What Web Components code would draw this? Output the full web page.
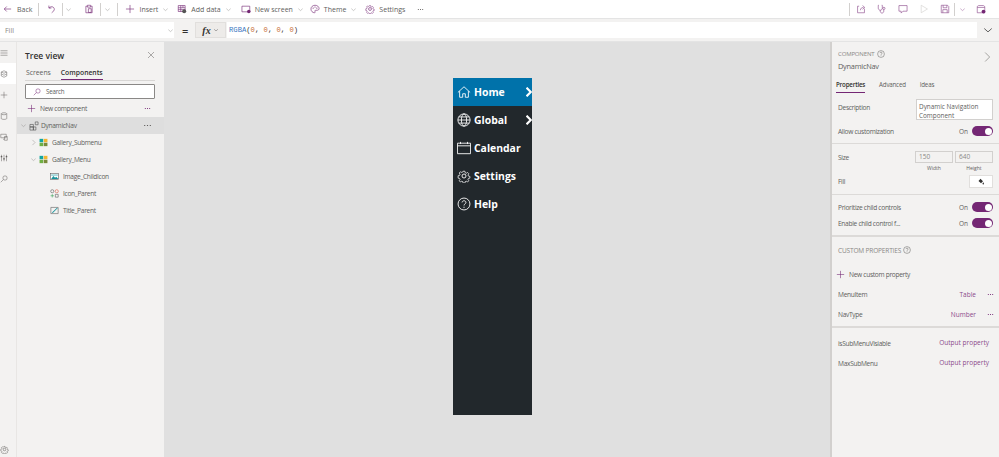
<!DOCTYPE html>
<html>
<head>
<meta charset="utf-8">
<title>Power Apps component editor</title>
<style>
  html, body { margin: 0; height: 100%; }
  body { font-family: "Open Sans", "Liberation Sans", sans-serif; overflow: hidden; background: #e0e0e0; }
</style>
</head>
<body>
<studio-app></studio-app>

<script>
const P = 'fill="none" stroke="currentColor" stroke-width="1"';
const ICONS = {
  back: `<path ${P} d="M13 8H2M6 4 2 8l4 4"/>`,
  undo: `<path ${P} d="M3 2.500v4h4M3.200 6.500C5 4.500 7.500 3.800 9.500 4.800c2.300 1.200 2.800 4 1.500 6L7.500 14"/>`,
  paste: `<path ${P} d="M5 3.500H3v10.500h10V3.500h-2M5.500 2h5v3h-5zM7 7.500h4.500v6H7z"/>`,
  plus: `<path ${P} d="M8 1.500v13M1.500 8h13"/>`,
  chev: `<path ${P} d="M3 6l5 4.500L13 6"/>`,
  chevr: `<path ${P} d="M5.500 2l6 6-6 6"/>`,
  data: `<path ${P} d="M2 2.500h11v9.500H2zM2 6h11M2 9h11M6 2.500V12M9.500 2.500V6"/><circle cx="11.500" cy="11.500" r="3.200" fill="#555"/>`,
  screen: `<path ${P} d="M1.500 3.500h12.500v9H1.500z"/><circle cx="12.500" cy="11.800" r="2.800" fill="#742774"/>`,
  preview: `<path ${P} d="M2 5c0-1.500 1-2.500 2.500-2.500h7C13 2.500 14 3.500 14 5v9H2zM2 5.500h12"/><circle cx="12" cy="12" r="3" fill="#742774"/>`,
  theme: `<path ${P} d="M8 2C4.200 2 1.500 4.800 1.500 8c0 3.400 2.800 6 5.500 6 1.500 0 1.500-1.200 1-2-.6-1 0-2 1.200-2h2.300c1.600 0 3-1 3-2.800C14.500 4.200 11.500 2 8 2z"/><circle cx="5" cy="6.500" r=".9" fill="#742774"/><circle cx="8" cy="4.800" r=".9" fill="#742774"/><circle cx="11" cy="6.500" r=".9" fill="#742774"/>`,
  gear: `<path ${P} d="M6.800 1.500h2.400l.4 2 1.500.7 1.800-1 1.600 1.700-1.100 1.700.6 1.500 2 .5v2.300l-2 .4-.6 1.500 1.100 1.700-1.600 1.600-1.800-1-1.500.6-.4 2H6.800l-.4-2-1.500-.6-1.800 1-1.600-1.600 1.100-1.700-.6-1.500-2-.4V7.600l2-.5.6-1.500L1.500 3.900l1.600-1.700 1.800 1 1.500-.7z" transform="translate(1.300 1.300) scale(.84)"/><circle ${P} cx="8" cy="8" r="2.300"/>`,
  share: `<path ${P} d="M5 3.500H2.500V14h11V7.500"/><path ${P} d="M7 10c.2-3 2-4.500 5-4.500M10.500 2.500l3.500 3-3.500 3"/>`,
  stetho: `<path ${P} d="M3 2H2v4.500c0 2 1.500 3.500 3.200 3.500S8.500 8.500 8.500 6.500V2h-1M5.200 10v1.500c0 1.700 1.200 3 2.800 3s2.800-1.300 2.800-3V9"/><circle ${P} cx="11" cy="7" r="1.800"/>`,
  comment: `<path ${P} d="M1.500 2.500h13v9H8l-3 3v-3H1.500z"/>`,
  play: `<path ${P} d="M3.500 2l10 6-10 6z"/>`,
  save: `<path ${P} d="M2 2h10l2 2v10H2zM5 2v4h6V2M4.500 14V9h7v5"/>`,
  close: `<path ${P} d="M2 2l12 12M14 2 2 14"/>`,
  search: `<circle ${P} cx="10" cy="6" r="4.300"/><path ${P} d="M6.800 9.200 1.500 14.500"/>`,
  menu: `<path ${P} d="M1 3.500h14M1 8h14M1 12.500h14"/>`,
  tree: `<path ${P} d="M2.500 4 8 1.500 13.500 4v8L8 14.500 2.500 12zM2.500 4 8 6.500 13.500 4M2.500 8 8 10.500 13.500 8"/>`,
  db: `<ellipse ${P} cx="8" cy="3.500" rx="5.500" ry="2"/><path ${P} d="M2.500 3.500v9.500c0 1 2.500 1.800 5.500 1.800s5.500-.8 5.500-1.800V3.500"/>`,
  media: `<path ${P} d="M1.500 2.500h11v7h-11zM6 12.500h2M9 7h5.500v7.500H9z"/>`,
  tools: `<path ${P} d="M3 1.500v13M8 1.500v13M13 1.500v13"/><path fill="currentColor" d="M1.500 4h3v2.500h-3zM6.500 8.500h3V11h-3zM11.500 4h3v2.500h-3z"/>`,
  dots: `<path fill="currentColor" d="M2 7h2v2H2zM7 7h2v2H7zM12 7h2v2h-2z"/>`,
  comp: `<path ${P} d="M1.500 5.500h5.500v4H1.500zM1.500 9.500h5.500v5H1.500zM7 9.500h4v5H7zM10 1.500h4.500V6H10z"/>`,
  gallery: `<rect x="1" y="1.500" width="6.500" height="6" fill="#12a5a0"/><rect x="8.500" y="1.500" width="6.500" height="6" fill="#f2b632"/><rect x="1" y="8.500" width="6.500" height="6" fill="#6fb043"/><rect x="8.500" y="8.500" width="6.500" height="6" fill="#7a8a3a"/>`,
  image: `<rect x="1" y="2.500" width="14" height="11" fill="#fff" stroke="#555"/><path fill="#17949c" d="M2 12.500 6 7l3 3 2-1.500 4 4z"/><path fill="#9fd6da" d="M2 4h12v3H2z"/>`,
  iconset: `<circle cx="4" cy="4" r="2.800" fill="none" stroke="#555"/><circle cx="12" cy="4" r="2.800" fill="none" stroke="#d9553f"/><path stroke="#2e9e4f" fill="none" d="M4 9v6M1 12h6"/><path stroke="#555" fill="none" d="M9.500 9.500h5v5h-5z"/>`,
  text: `<path fill="none" stroke="#555" d="M1.500 2.500h13v11h-13z"/><path fill="#17949c" d="M4 11 12.500 3l1 1L5 12.500H4z"/>`,
  help: `<circle ${P} cx="8" cy="8" r="6.800"/><path ${P} d="M5.800 6.200C6 4.800 7 4.300 8 4.300c1.300 0 2.200.8 2.200 1.900 0 1.700-2.200 1.700-2.200 3.500"/><path fill="currentColor" d="M7.400 11h1.200v1.200H7.400z"/>`,
  home: `<path ${P} d="M1 8.500 8 2l7 6.500M3 7v7h3.500v-4h3v4H13V7"/>`,
  globe: `<circle ${P} cx="8" cy="8" r="7"/><ellipse ${P} cx="8" cy="8" rx="3" ry="7"/><path ${P} d="M1 8h14M2 4.500h12M2 11.500h12"/>`,
  calendar: `<path ${P} d="M.5 2.500h15v12H.5zM.5 5.500h15M4 1v2.500M12 1v2.500"/>`,
  fill: `<path fill="currentColor" d="M7 1.500 12 6.500 8 10.500 3 6zM12.500 8.500c.8 1.300 1.500 2 1.500 3a1.500 1.500 0 0 1-3 0c0-1 .8-1.700 1.500-3z"/>`
};

class UiIcon extends HTMLElement {
  connectedCallback() {
    const s = this.getAttribute('size') || 10;
    this.attachShadow({ mode: 'open' }).innerHTML = `
      <style>
        :host { display: inline-flex; flex: none; width: ${s}px; height: ${s}px; }
        svg { width: 100%; height: 100%; display: block; }
      </style>
      <svg viewBox="0 0 16 16">${ICONS[this.getAttribute('name')] || ''}</svg>`;
  }
}
customElements.define('ui-icon', UiIcon);

class ToolItem extends HTMLElement {
  connectedCallback() {
    const icon = this.getAttribute('icon');
    const chev = this.hasAttribute('chev');
    this.attachShadow({ mode: 'open' }).innerHTML = `
      <style>
        :host { display: inline-flex; align-items: center; color: #605e5c; font-size: 7px; flex: none; }
        .i { color: #742774; }
        .t { margin-left: 4px; }
        .c { color: #8a8886; margin-left: 4px; }
      </style>
      ${icon ? `<ui-icon class="i" name="${icon}" size="10"></ui-icon>` : ''}
      <span class="t"><slot></slot></span>
      ${chev ? `<ui-icon class="c" name="chev" size="7"></ui-icon>` : ''}`;
  }
}
customElements.define('tool-item', ToolItem);

class AppToolbar extends HTMLElement {
  connectedCallback() {
    this.attachShadow({ mode: 'open' }).innerHTML = `
      <style>
        :host { display: flex; align-items: center; height: 18px; background: #fff; border-bottom: 1px solid #e4e4e4; padding-left: 3px; color: #742774; }
        .sep { width: 1px; height: 13px; background: #d2d0ce; flex: none; }
        .chev { color: #8a8886; }
        .right { margin-left: auto; display: flex; align-items: center; padding-right: 13px; }
        .right ui-icon { color: #8b4a8b; }
      </style>
      <tool-item icon="back">Back</tool-item>
      <span class="sep" style="margin-left:6px"></span>
      <ui-icon name="undo" size="10" style="margin-left:8px"></ui-icon>
      <span class="sep" style="margin-left:5px"></span>
      <ui-icon class="chev" name="chev" size="7" style="margin-left:2px"></ui-icon>
      <ui-icon name="paste" size="10" style="margin-left:12px"></ui-icon>
      <span class="sep" style="margin-left:6px"></span>
      <ui-icon class="chev" name="chev" size="7" style="margin-left:3px"></ui-icon>
      <span class="sep" style="margin-left:6px"></span>
      <tool-item icon="plus" chev style="margin-left:7px">Insert</tool-item>
      <tool-item icon="data" chev style="margin-left:8px">Add data</tool-item>
      <tool-item icon="screen" chev style="margin-left:9px">New screen</tool-item>
      <tool-item icon="theme" chev style="margin-left:6px">Theme</tool-item>
      <tool-item icon="gear" style="margin-left:8px">Settings</tool-item>
      <ui-icon name="dots" size="7" style="margin-left:12px;color:#605e5c"></ui-icon>
      <div class="right">
        <span class="sep" style="margin-right:6px"></span>
        <ui-icon name="share" size="10"></ui-icon>
        <ui-icon name="stetho" size="10" style="margin-left:11px"></ui-icon>
        <ui-icon name="comment" size="10" style="margin-left:11px"></ui-icon>
        <ui-icon name="play" size="10" style="margin-left:11px;color:#d2d0ce"></ui-icon>
        <ui-icon name="save" size="10" style="margin-left:11px"></ui-icon>
        <span class="sep" style="margin-left:4px"></span>
        <ui-icon class="chev" name="chev" size="7" style="margin-left:4px"></ui-icon>
        <ui-icon name="preview" size="10" style="margin-left:10px"></ui-icon>
      </div>`;
  }
}
customElements.define('app-toolbar', AppToolbar);

class FormulaBar extends HTMLElement {
  connectedCallback() {
    this.attachShadow({ mode: 'open' }).innerHTML = `
      <style>
        :host { display: flex; align-items: center; height: 23px; background: #f3f2f1; box-sizing: border-box; border-bottom: 1px solid #e4e4e4; font-size: 7px; color: #605e5c; }
        .sel { width: 174px; height: 16px; background: #fff; display: flex; align-items: center; padding: 0 0 0 5px; box-sizing: border-box; color: #8a8886; justify-content: space-between; }
        .eq { margin-left: 8px; width: 6px; font-size: 11px; color: #323130; font-weight: 600; text-align: center; }
        .fx { margin-left: 7px; width: 31px; height: 16px; background: #edebe9; display: flex; align-items: center; justify-content: center; gap: 2px; font: italic bold 10px "Liberation Serif", serif; color: #323130; border: 1px solid #e1dfdd; box-sizing: border-box; }
        .inp { flex: 1; height: 16px; background: #fff; display: flex; align-items: center; padding-left: 2px; font: 7.200px "Liberation Mono", monospace; color: #323130; margin-left: 1px; }
        .f { color: #3b78c2; }
        .n { color: #c8703a; }
        .end { width: 22px; display: flex; justify-content: center; color: #323130; }
      </style>
      <div class="sel"><span>Fill</span><ui-icon name="chev" size="7"></ui-icon></div>
      <span class="eq">=</span>
      <div class="fx"><span>fx</span><ui-icon name="chev" size="6"></ui-icon></div>
      <div class="inp"><span><span class="f">RGBA</span>(<span class="n">0</span>, <span class="n">0</span>, <span class="n">0</span>, <span class="n">0</span>)</span></div>
      <div class="end"><ui-icon name="chev" size="12"></ui-icon></div>`;
  }
}
customElements.define('formula-bar', FormulaBar);

class SideRail extends HTMLElement {
  connectedCallback() {
    const names = ['menu', 'tree', 'plus', 'db', 'media', 'tools', 'search'];
    this.attachShadow({ mode: 'open' }).innerHTML = `
      <style>
        :host { display: flex; flex-direction: column; width: 16px; flex: none; background: #f3f2f1; border-right: 1px solid #e8e6e4; color: #605e5c; }
        .b { height: 21px; display: flex; align-items: center; }
        .on { background: #fff; }
        .gear { margin-top: auto; margin-bottom: 1px; height: 14px; }
      </style>
      ${names.map((n, i) => `<div class="b ${i === 1 ? 'on' : ''}"><ui-icon name="${n}" size="8"></ui-icon></div>`).join('')}
      <div class="b gear"><ui-icon name="gear" size="9"></ui-icon></div>`;
  }
}
customElements.define('side-rail', SideRail);

class TreeRow extends HTMLElement {
  connectedCallback() {
    const depth = +this.getAttribute('depth') || 0;
    const twist = this.getAttribute('twist');
    const sel = this.hasAttribute('selected');
    this.attachShadow({ mode: 'open' }).innerHTML = `
      <style>
        :host { display: flex; align-items: center; height: 17px; font-size: 6.600px; letter-spacing: -.3px; color: #605e5c; padding-left: ${2 + depth}px; background: ${sel ? '#dedede' : 'transparent'}; }
        .tw { width: 9px; display: flex; justify-content: center; color: #8a8886; flex: none; }
        .ic { margin: 0 ${sel ? 2 : 4}px 0 1px; color: #555; }
        .dots { margin-left: auto; margin-right: 12px; color: #605e5c; }
      </style>
      <span class="tw">${twist ? `<ui-icon name="${twist}" size="7"></ui-icon>` : ''}</span>
      <ui-icon class="ic" name="${this.getAttribute('icon')}" size="${sel ? 10 : 9}"></ui-icon>
      <span><slot></slot></span>
      ${sel ? `<ui-icon class="dots" name="dots" size="9"></ui-icon>` : ''}`;
  }
}
customElements.define('tree-row', TreeRow);

class TreePanel extends HTMLElement {
  connectedCallback() {
    this.attachShadow({ mode: 'open' }).innerHTML = `
      <style>
        :host { display: flex; flex-direction: column; width: 147px; flex: none; background: #f3f2f1; box-sizing: border-box; }
        .head { display: flex; align-items: center; justify-content: space-between; padding: 6px 9px 0 8px; height: 14px; font-size: 8.500px; font-weight: 600; color: #323130; }
        .head ui-icon { color: #605e5c; }
        .tabs { display: flex; gap: 10px; margin: 3px 9px 0 8px; height: 15px; padding-left: 1px; font-size: 6.800px; color: #605e5c; border-bottom: 1px solid #d8d6d4; align-items: stretch; }
        .tabs span { display: flex; align-items: center; height: 14px; }
        .tabs .on { font-weight: 600; color: #323130; box-shadow: inset 0 -1px 0 #742774; height: 15px; }
        .search { margin: 3px 9px 0 8px; height: 15px; box-sizing: border-box; background: #fff; border: 1px solid #8a8886; border-radius: 1px; display: flex; align-items: center; gap: 5px; padding-left: 7px; font-size: 6.200px; letter-spacing: -.2px; color: #605e5c; }
        .search ui-icon { color: #742774; }
        .new { display: flex; align-items: center; height: 18px; padding-left: 10px; font-size: 6.600px; letter-spacing: -.3px; color: #605e5c; }
        .new .pl { color: #742774; margin-right: 4px; }
        .new .dt { margin-left: auto; margin-right: 13px; color: #742774; }
        .list { display: flex; flex-direction: column; }
      </style>
      <div class="head"><span>Tree view</span><ui-icon name="close" size="8"></ui-icon></div>
      <div class="tabs"><span>Screens</span><span class="on">Components</span></div>
      <div class="search"><ui-icon name="search" size="8"></ui-icon><span>Search</span></div>
      <div class="new"><ui-icon class="pl" name="plus" size="9"></ui-icon><span>New component</span><ui-icon class="dt" name="dots" size="7"></ui-icon></div>
      <div class="list"><slot></slot></div>`;
  }
}
customElements.define('tree-panel', TreePanel);

class NavItem extends HTMLElement {
  connectedCallback() {
    const active = this.hasAttribute('active');
    const more = this.hasAttribute('more');
    this.attachShadow({ mode: 'open' }).innerHTML = `
      <style>
        :host { display: flex; align-items: center; height: 28px; padding-left: 4px; background: ${active ? '#0072aa' : 'transparent'}; color: #fff; font: 700 10.400px "Open Sans", sans-serif; position: relative; }
        ui-icon { margin-right: 3px; }
        svg.more { position: absolute; right: 0; top: 9px; width: 6px; height: 10px; }
      </style>
      <ui-icon name="${this.getAttribute('icon')}" size="14"></ui-icon>
      <span><slot></slot></span>
      ${more ? `<svg class="more" viewBox="0 0 6 10"><path d="M0.500 .7 4.800 5 .5 9.300" fill="none" stroke="#fff" stroke-width="2.200"/></svg>` : ''}`;
  }
}
customElements.define('nav-item', NavItem);

class CanvasNav extends HTMLElement {
  connectedCallback() {
    this.attachShadow({ mode: 'open' }).innerHTML = `
      <style>
        :host { display: block; width: 79px; height: 337px; background: #22282c; }
      </style>
      <slot></slot>`;
  }
}
customElements.define('canvas-nav', CanvasNav);

class UiToggle extends HTMLElement {
  connectedCallback() {
    this.attachShadow({ mode: 'open' }).innerHTML = `
      <style>
        :host { display: inline-flex; align-items: center; gap: 4px; font-size: 6.500px; letter-spacing: 0; color: #605e5c; }
        .p { width: 21px; height: 10px; border-radius: 5px; background: #742774; position: relative; display: block; }
        .k { position: absolute; right: 1.500px; top: 1.500px; width: 7px; height: 7px; border-radius: 50%; background: #fff; }
      </style>
      <span>On</span><span class="p"><span class="k"></span></span>`;
  }
}
customElements.define('ui-toggle', UiToggle);

class PropRow extends HTMLElement {
  connectedCallback() {
    const h = this.getAttribute('h') || 16;
    this.attachShadow({ mode: 'open' }).innerHTML = `
      <style>
        :host { display: flex; align-items: center; justify-content: space-between; height: ${h}px; padding: 0 6px; font-size: 6.600px; letter-spacing: -.3px; color: #605e5c; }
      </style>
      <span><slot name="label"></slot></span>
      <slot></slot>`;
  }
}
customElements.define('prop-row', PropRow);

class PropsPanel extends HTMLElement {
  connectedCallback() {
    this.attachShadow({ mode: 'open' }).innerHTML = `
      <style>
        :host { display: flex; flex-direction: column; width: 167px; flex: none; margin-left: auto; background: #f3f2f1; border-left: 2px solid #d2d0ce; box-sizing: content-box; }
        .head { height: 39px; padding: 6px 6px 0; box-sizing: border-box; position: relative; }
        .cap { display: flex; align-items: center; gap: 3px; font-size: 6px; letter-spacing: -.15px; color: #8a8886; height: 11px; }
        .cap ui-icon { color: #605e5c; }
        .name { font-size: 7.400px; letter-spacing: -.25px; color: #605e5c; height: 15px; line-height: 15px; }
        .go { position: absolute; right: 6px; top: 9px; color: #8a8886; }
      </style>
      <div class="head">
        <div class="cap">COMPONENT <ui-icon name="help" size="8"></ui-icon></div>
        <div class="name">DynamicNav</div>
        <ui-icon class="go" name="chevr" size="12"></ui-icon>
      </div>
      <slot></slot>`;
  }
}
customElements.define('props-panel', PropsPanel);

class StudioApp extends HTMLElement {
  connectedCallback() {
    this.attachShadow({ mode: 'open' }).innerHTML = `
      <style>
        :host { display: flex; flex-direction: column; height: 457px; width: 999px; overflow: hidden; }
        .main { display: flex; flex: 1; min-height: 0; }
        .canvas { flex: 1; background: #e0e0e0; padding: 36px 0 0 289px; box-sizing: border-box; min-width: 0; }
        .tabs { display: flex; gap: 14px; padding: 0 4px; height: 12px; font-size: 6.200px; letter-spacing: -.2px; color: #605e5c; margin-bottom: 1px; align-items: flex-start; }
        .tabs span { height: 12px; box-sizing: border-box; line-height: 8px; }
        .tabs .on { color: #323130; font-weight: 600; border-bottom: 1px solid #742774; }
        .tx { box-sizing: border-box; background: #fff; border: 1px solid #d2d0ce; }
        .desc { width: 77px; height: 21px; padding: 2px 2px; font-size: 6.400px; letter-spacing: 0; line-height: 9px; color: #605e5c; }
        .sizes { display: flex; gap: 2px; letter-spacing: 0; }
        .sizes div { width: 38px; }
        .sizes .v { height: 12px; box-sizing: border-box; border: 1px solid #d2d0ce; background: #f3f2f1; color: #8a8886; font-size: 6.500px; line-height: 10px; padding-left: 3px; }
        .sizes .l { font-size: 5px; color: #605e5c; text-align: center; height: 10px; line-height: 10px; }
        .btn { width: 24px; height: 13px; display: flex; align-items: center; justify-content: center; background: #fff; border: 1px solid #e1dfdd; box-sizing: border-box; color: #323130; }
        hr { border: 0; height: 1px; background: #dcdad8; margin: 0; flex: none; }
        .thick { height: 2px; }
        .cap { display: flex; align-items: center; gap: 2px; padding: 0 6px; height: 14px; font-size: 6.500px; letter-spacing: -.15px; color: #8a8886; }
        .cap ui-icon { color: #605e5c; }
        .newp { display: flex; align-items: center; gap: 4px; padding: 0 4px; height: 16px; font-size: 6.600px; letter-spacing: -.3px; color: #605e5c; }
        .newp ui-icon { color: #742774; }
        .val { display: flex; align-items: center; color: #8b4a8b; font-size: 6.500px; letter-spacing: 0; margin-right: -1px; }
        .val ui-icon { margin-left: 11px; color: #742774; }
        .out { color: #8b4a8b; font-size: 6.500px; letter-spacing: 0; margin-right: 4px; margin-bottom: 2px; }
        .up4 { display: block; margin-bottom: 4px; }
        .up9 { display: block; margin-bottom: 9px; }
      </style>
      <app-toolbar></app-toolbar>
      <formula-bar></formula-bar>
      <div class="main">
        <side-rail></side-rail>
        <tree-panel>
          <tree-row selected twist="chev" icon="comp">DynamicNav</tree-row>
          <tree-row depth="10" twist="chevr" icon="gallery">Gallery_Submenu</tree-row>
          <tree-row depth="10" twist="chev" icon="gallery">Gallery_Menu</tree-row>
          <tree-row depth="21" icon="image">Image_ChildIcon</tree-row>
          <tree-row depth="21" icon="iconset">Icon_Parent</tree-row>
          <tree-row depth="21" icon="text">Title_Parent</tree-row>
        </tree-panel>
        <div class="canvas">
          <canvas-nav>
            <nav-item active more icon="home">Home</nav-item>
            <nav-item more icon="globe">Global</nav-item>
            <nav-item icon="calendar">Calendar</nav-item>
            <nav-item icon="gear">Settings</nav-item>
            <nav-item icon="help">Help</nav-item>
          </canvas-nav>
        </div>
        <props-panel>
          <div class="tabs"><span class="on">Properties</span><span>Advanced</span><span>Ideas</span></div>
          <prop-row h="28" style="margin-top:1px"><span slot="label" class="up4">Description</span><div class="tx desc">Dynamic Navigation Component</div></prop-row>
          <prop-row h="16"><span slot="label">Allow customization</span><ui-toggle></ui-toggle></prop-row>
          <hr style="margin-top:4px">
          <prop-row h="22" style="margin-top:7px"><span slot="label" class="up9">Size</span><div class="sizes"><div><div class="v">150</div><div class="l">Width</div></div><div><div class="v">640</div><div class="l">Height</div></div></div></prop-row>
          <prop-row h="13" style="margin-top:2px"><span slot="label">Fill</span><div class="btn"><ui-icon name="fill" size="8"></ui-icon></div></prop-row>
          <hr style="margin-top:6px">
          <prop-row h="16" style="margin-top:4px"><span slot="label">Prioritize child controls</span><ui-toggle></ui-toggle></prop-row>
          <prop-row h="16"><span slot="label">Enable child control f...</span><ui-toggle></ui-toggle></prop-row>
          <hr class="thick" style="margin-top:4px">
          <div class="cap" style="margin-top:6px">CUSTOM PROPERTIES <ui-icon name="help" size="8"></ui-icon></div>
          <div class="newp" style="margin-top:9px"><ui-icon name="plus" size="9"></ui-icon><span>New custom property</span></div>
          <prop-row h="20" style="margin-top:2px"><span slot="label">MenuItem</span><span class="val">Table<ui-icon name="dots" size="7"></ui-icon></span></prop-row>
          <prop-row h="20"><span slot="label">NavType</span><span class="val">Number<ui-icon name="dots" size="7"></ui-icon></span></prop-row>
          <hr class="thick" style="margin-top:2px">
          <prop-row h="20" style="margin-top:5px"><span slot="label">isSubMenuVisiable</span><span class="out">Output property</span></prop-row>
          <prop-row h="20"><span slot="label">MaxSubMenu</span><span class="out">Output property</span></prop-row>
        </props-panel>
      </div>`;
  }
}
customElements.define('studio-app', StudioApp);
</script>
</body>
</html>
